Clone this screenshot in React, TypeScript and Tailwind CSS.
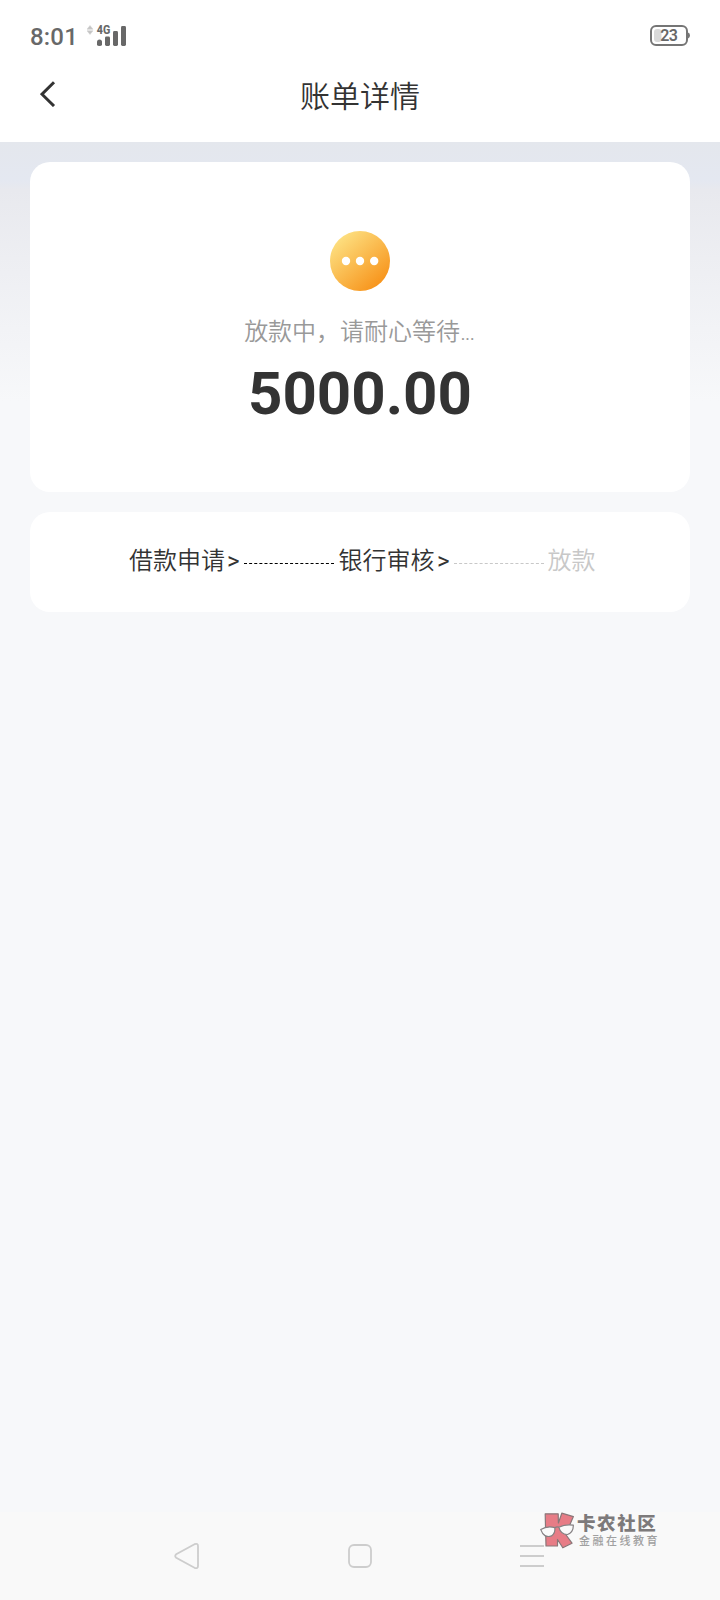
import React from "react";

function SignalIcon() {
  return (
    <svg width="40" height="23" viewBox="0 -1 40 23" className="mt-[-1px] block">
      <path d="M3 0.6 6 4.2H0Z M3 9.4 6 5.8H0Z" fill="#c4c4c4" stroke="#d2d2d2" strokeWidth="0.6" />
      <path d="M10 17q0-2.5 2.5-2.5t2.5 2.5v2.5q0 1.5-2.5 1.5t-2.5-1.5z" fill="#686868" />
      <rect x="18" y="11.5" width="5" height="9.5" rx="1.4" fill="#686868" />
      <rect x="26" y="6" width="5" height="15" rx="1.4" fill="#686868" />
      <rect x="34" y="1" width="5" height="20" rx="1.4" fill="#686868" />
      <text x="9.8" y="9.4" fontFamily="Roboto" fontWeight="800" fontSize="12" textLength="13.5" lengthAdjust="spacingAndGlyphs" fill="#686868">
        4G
      </text>
    </svg>
  );
}

function BatteryIcon() {
  return (
    <svg width="41" height="22" viewBox="0 0 41 22" className="block">
      <rect x="1" y="1" width="36" height="19" rx="5" fill="none" stroke="#757575" strokeWidth="2" />
      <path d="M38 7.6q2 .6 2 2.9t-2 2.9z" fill="#757575" />
      <rect x="4" y="4" width="7.5" height="13" rx="3" fill="#d9d9d9" />
      <text x="10.3" y="16.2" fontFamily="Roboto" fontWeight="600" fontSize="16" textLength="17.6" fill="#686868">
        23
      </text>
    </svg>
  );
}

function PendingIcon() {
  return (
    <svg width="60" height="60" viewBox="0 0 60 60" className="block">
      <defs>
        <linearGradient id="pending" x1="0.15" y1="0.1" x2="0.85" y2="0.9">
          <stop offset="0" stopColor="#fde081" />
          <stop offset="1" stopColor="#f7931a" />
        </linearGradient>
      </defs>
      <circle cx="30" cy="30" r="30" fill="url(#pending)" />
      <circle cx="16" cy="30" r="4.2" fill="#fff" />
      <circle cx="30" cy="30" r="4.2" fill="#fff" />
      <circle cx="44.2" cy="30" r="4.2" fill="#fff" />
    </svg>
  );
}

function BrandLogo() {
  return (
    <svg width="36" height="38" viewBox="0 0 36 38" className="block">
      <path
        d="M5.2 1.8H18.2L18.4 11 21.8 1.2 33.4 4.6 28 17 25 21.5 32 31.2 22.8 35.8 17.5 27.5V34H6Z"
        fill="#e77c86"
        stroke="#8a7779"
        strokeWidth="1.2"
        strokeLinejoin="round"
      />
      <path d="M0.8 17.6Q7 13.6 14.8 15.6 15.6 21 11.5 23.9 3.8 26.5 0.8 17.6Z" fill="#fafafa" stroke="#858083" strokeWidth="1.2" />
      <path d="M18.8 15.2Q26 11.8 33.3 13.2 33.5 20 27.5 22.5 20.8 22.7 18.8 15.2Z" fill="#fafafa" stroke="#858083" strokeWidth="1.2" />
      <path d="M14.8 15.8Q17 14.2 18.8 15.2" fill="none" stroke="#858083" strokeWidth="1.2" />
    </svg>
  );
}

function DashedLine({ color }: { color: string }) {
  return (
    <svg width="90" height="1" viewBox="0 0 90 1" className="mt-[5px] block shrink-0">
      <line x1="0" y1="0.5" x2="90" y2="0.5" stroke={color} strokeWidth="1" strokeDasharray="3 2.12" />
    </svg>
  );
}

export default function App() {
  return (
    <div className="flex h-[1600px] w-[720px] flex-col overflow-hidden bg-[#f7f8fa] font-['Roboto','Noto_Sans_CJK_SC',sans-serif] text-[#333333]">
      <header className="flex h-[142px] shrink-0 flex-col bg-white">
        <div className="flex h-[70px] items-start justify-between pt-[25px] pr-[29px] pl-[30px]">
          <div className="flex items-start">
            <span className="mt-[-1px] w-[57px] text-[24px] leading-[26px] font-[470] tracking-[0.2px] text-[#686868]">8:01</span>
            <SignalIcon />
          </div>
          <BatteryIcon />
        </div>
        <div className="grid h-[48px] grid-cols-[1fr_auto_1fr] items-center px-10">
          <svg width="16" height="26" viewBox="0 0 16 26" className="block">
            <path d="M14 1.2 2 13.2 14 25" fill="none" stroke="#333" strokeWidth="3" />
          </svg>
          <h1 className="font-['Noto_Sans_CJK_SC',sans-serif] text-[30px] leading-[40px] font-[350]">账单详情</h1>
        </div>
      </header>

      <main className="flex flex-1 flex-col gap-5 bg-[linear-gradient(#e4e7ed_0px,#e4e8f1_38px,#e8e9ee_48px,#eeeff3_130px,#f7f8fa_260px)] px-[30px] pt-5">
        <section className="flex h-[330px] flex-col items-center rounded-[20px] bg-white pt-[69px]">
          <PendingIcon />
          <p className="mt-[23px] pr-[1.5px] text-[24px] leading-[36px] font-[350] text-[#999999]">
            放款中，请耐心等待<span className="tracking-[-1px]">...</span>
          </p>
          <p className="mt-[9px] text-[60px] leading-[70px] font-bold">5000.00</p>
        </section>
        <section className="flex h-[100px] items-center rounded-[20px] bg-white pb-0.5 pl-[99px] text-[24px] leading-[36px] font-[350]">
          <span className="w-[98px] whitespace-nowrap">借款申请</span>
          <span className="w-[17px] font-normal">&gt;</span>
          <DashedLine color="#000000" />
          <span className="ml-[4.5px] w-[98.5px] whitespace-nowrap">银行审核</span>
          <span className="w-[17px] font-normal">&gt;</span>
          <DashedLine color="#c8c8c8" />
          <span className="ml-[3.5px] text-[#c8c8c8]">放款</span>
        </section>
      </main>

      <nav className="relative h-[88px] shrink-0 bg-[#f9f9f9]">
        <div className="flex h-full items-center justify-between pr-[176px] pl-[174px]">
          <svg width="26" height="28" viewBox="0 0 26 28" className="block">
            <path
              d="M20.5 2.2 2.2 12.3Q0.2 14 2.2 15.7L20.5 25.8Q24 27.2 24 24V4Q24 0.8 20.5 2.2Z"
              fill="none"
              stroke="#cdcdcd"
              strokeWidth="1.8"
            />
          </svg>
          <svg width="24" height="24" viewBox="0 0 24 24" className="block">
            <rect x="1" y="1" width="22" height="22" rx="5" fill="none" stroke="#cdcdcd" strokeWidth="1.8" />
          </svg>
          <svg width="24" height="24" viewBox="0 0 24 24" className="block">
            <path d="M0 2H24M0 12H24M0 22H24" stroke="#cdcdcd" strokeWidth="2" />
          </svg>
        </div>
        <div className="absolute top-0 left-[540px] flex">
          <BrandLogo />
          <div className="flex flex-col pt-[1px] font-['Noto_Sans_CJK_SC',sans-serif] whitespace-nowrap">
            <span className="pl-[1px] text-[18.5px] leading-[19px] font-black tracking-[1.6px] text-[#7d7a7b]">卡农社区</span>
            <span className="mt-[2px] pl-[3px] text-[11px] leading-[12px] font-medium tracking-[2.5px] text-[#a0a0a0]">金融在线教育</span>
          </div>
        </div>
      </nav>
    </div>
  );
}
